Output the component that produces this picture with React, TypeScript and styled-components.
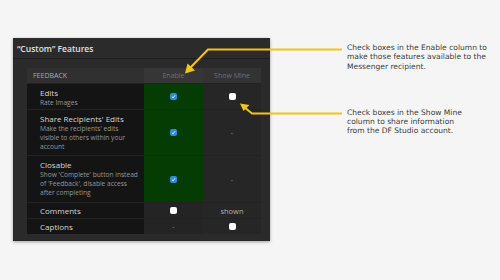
import React from "react";
import styled, { createGlobalStyle } from "styled-components";

const Global = createGlobalStyle`
  html, body { margin: 0; padding: 0; background: #f5f5f5; }
  body { width: 500px; height: 280px; overflow: hidden; font-family: "Open Sans", "DejaVu Sans", sans-serif; }
`;

const Page = styled.div`
  position: relative;
  width: 500px;
  height: 280px;
  display: flex;
  align-items: flex-start;
`;

const Panel = styled.div`
  margin: 38px 0 0 13px;
  width: 257px;
  background: #2a2a2a;
  box-shadow: 0 1px 3px rgba(0, 0, 0, 0.35);
`;

const TitleBar = styled.div`
  height: 20px;
  padding-left: 4px;
  display: flex;
  align-items: center;
  font-size: 8.5px;
  font-weight: 600;
  color: #e0e0e0;
  background: #2b2b2b;
  border-bottom: 1px solid #1f1f1f;
`;

const Body = styled.div`
  padding: 9px 9px 7px 14px;
`;

const Table = styled.div`
  display: grid;
  grid-template-columns: 117px 59px 58px;
  row-gap: 1px;
  background: #222;
`;

const HeadCell = styled.div<{ $align?: string; $bg: string; $color: string }>`
  height: 15px;
  display: flex;
  align-items: center;
  justify-content: ${(p) => p.$align || "flex-start"};
  padding-left: ${(p) => (p.$align ? "0" : "6px")};
  background: ${(p) => p.$bg};
  color: ${(p) => p.$color};
  font-size: 7px;
`;

const LabelCell = styled.div<{ $h: number }>`
  min-height: ${(p) => p.$h}px;
  box-sizing: border-box;
  background: #141414;
  padding: 3px 6px 0 13px;
  display: flex;
  flex-direction: column;
  justify-content: ${(p) => (p.$h < 20 ? "center" : "flex-start")};
  ${(p) => (p.$h < 20 ? "padding-top: 0;" : "")}
`;

const Title = styled.div`
  font-size: 8px;
  line-height: 11px;
  color: #d6d6d6;
`;

const Desc = styled.div`
  font-size: 6.6px;
  line-height: 9px;
  color: #979797;
`;

const ValueCell = styled.div<{ $bg: string }>`
  background: ${(p) => p.$bg};
  display: flex;
  align-items: center;
  justify-content: center;
  font-size: 7.5px;
  color: #b0b0b0;
`;

const Box = styled.span<{ $checked?: boolean }>`
  width: 7px;
  height: 7px;
  border-radius: 2px;
  background: ${(p) => (p.$checked ? "#2c8de0" : "#ffffff")};
  display: flex;
  align-items: center;
  justify-content: center;
`;

const Dash = styled.span`
  color: #8a8a8a;
  font-size: 7px;
`;

const Notes = styled.div`
  margin-left: 77px;
  padding-top: 43px;
  display: flex;
  flex-direction: column;
  gap: 37px;
`;

const Note = styled.div`
  font-family: "DejaVu Sans", Verdana, sans-serif;
  font-size: 7.55px;
  line-height: 9.3px;
  color: #3a3a3a;
  width: 152px;
`;

const Overlay = styled.svg`
  position: absolute;
  left: 0;
  top: 0;
  pointer-events: none;
`;

const Check = ({ on }: { on?: boolean }) => (
  <Box $checked={on}>
    {on && (
      <svg width="5" height="5" viewBox="0 0 10 10">
        <path d="M2 5.5 L4.2 7.6 L8 2.6" stroke="#fff" strokeWidth="1.8" fill="none" />
      </svg>
    )}
  </Box>
);

type Row = {
  title: string;
  desc?: string[];
  h: number;
  green: boolean;
  enable: React.ReactNode;
  mine: React.ReactNode;
};

const rows: Row[] = [
  { title: "Edits", desc: ["Rate Images"], h: 25, green: true, enable: <Check on />, mine: <Check /> },
  {
    title: "Share Recipients' Edits",
    desc: ["Make the recipients' edits", "visible to others within your", "account"],
    h: 45,
    green: true,
    enable: <Check on />,
    mine: <Dash>-</Dash>,
  },
  {
    title: "Closable",
    desc: ["Show 'Complete' button instead", "of 'Feedback', disable access", "after completing"],
    h: 46,
    green: true,
    enable: <Check on />,
    mine: <Dash>-</Dash>,
  },
  { title: "Comments", h: 15, green: false, enable: <Check />, mine: <span>shown</span> },
  { title: "Captions", h: 15, green: false, enable: <Dash>-</Dash>, mine: <Check /> },
];

export default function App() {
  return (
    <>
      <Global />
      <Page>
        <Panel>
          <TitleBar>“Custom” Features</TitleBar>
          <Body>
            <Table>
              <HeadCell $bg="#303030" $color="#a8a8a8">FEEDBACK</HeadCell>
              <HeadCell $align="center" $bg="#363636" $color="#6f6f6f">Enable</HeadCell>
              <HeadCell $align="center" $bg="#333333" $color="#6f6f6f">Show Mine</HeadCell>
              {rows.map((r) => (
                <React.Fragment key={r.title}>
                  <LabelCell $h={r.h}>
                    <Title>{r.title}</Title>
                    {r.desc?.map((d) => (
                      <Desc key={d}>{d}</Desc>
                    ))}
                  </LabelCell>
                  <ValueCell $bg={r.green ? "#043c04" : "#242424"}>{r.enable}</ValueCell>
                  <ValueCell $bg="#262626">{r.mine}</ValueCell>
                </React.Fragment>
              ))}
            </Table>
          </Body>
        </Panel>
        <Notes>
          <Note>
            Check boxes in the Enable column to
            <br />
            make those features available to the
            <br />
            Messenger recipient.
          </Note>
          <Note>
            Check boxes in the Show Mine
            <br />
            column to share information
            <br />
            from the DF Studio account.
          </Note>
        </Notes>
        <Overlay width="500" height="280" viewBox="0 0 500 280">
          <g stroke="#f6c21c" strokeWidth="2" fill="none" strokeLinejoin="round">
            <polyline points="342,49.5 208,49.5 190,68" />
            <polyline points="342,113.5 252,113.5 244,107" />
          </g>
          <g fill="#f6c21c">
            <polygon points="185,73.5 187.5,63.5 195,70.5" />
            <polygon points="240,103.5 249.5,105 243.5,111" />
          </g>
        </Overlay>
      </Page>
    </>
  );
}
